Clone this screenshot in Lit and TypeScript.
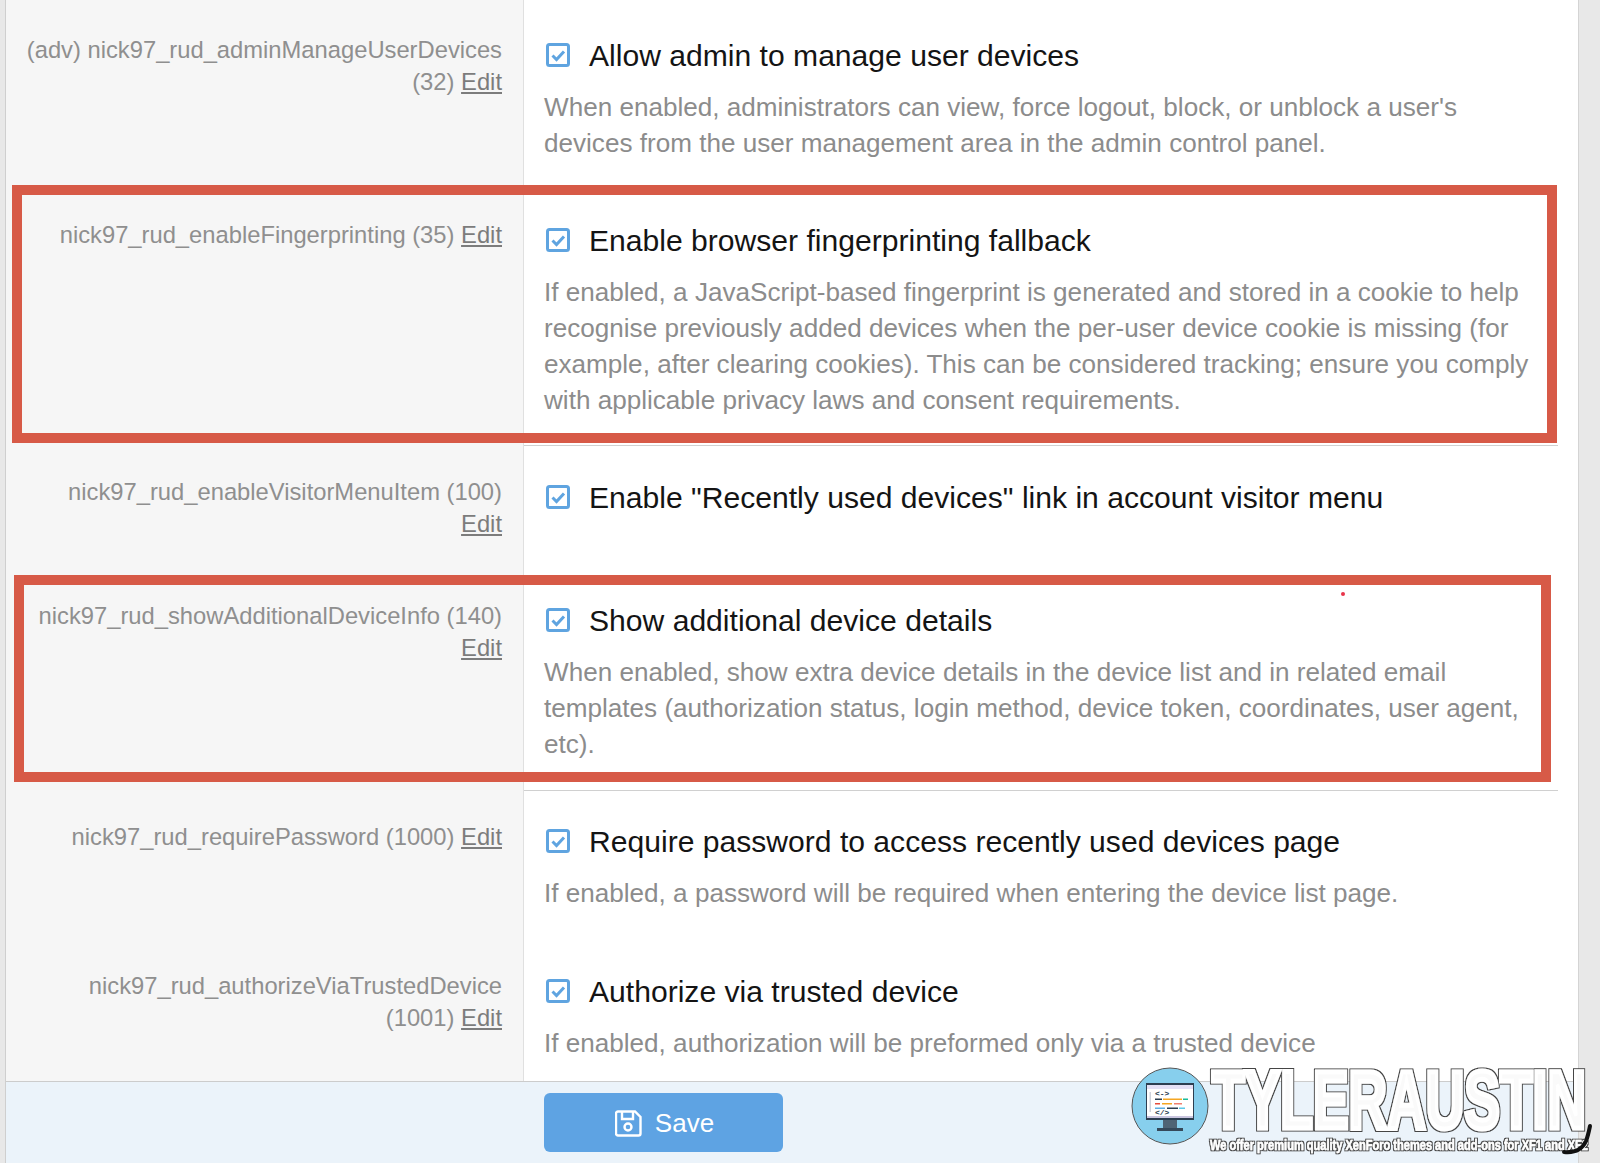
import { LitElement, html, css, svg } from 'lit';
import { customElement } from 'lit/decorators.js';

interface OptionRow {
  label: string;
  title: string;
  desc: string[];
  rule?: boolean;
}

const ROWS: OptionRow[] = [
  {
    label: '(adv) nick97_rud_adminManageUserDevices (32)',
    title: 'Allow admin to manage user devices',
    desc: [
      "When enabled, administrators can view, force logout, block, or unblock a user's",
      'devices from the user management area in the admin control panel.',
    ],
  },
  {
    label: 'nick97_rud_enableFingerprinting (35)',
    title: 'Enable browser fingerprinting fallback',
    desc: [
      'If enabled, a JavaScript-based fingerprint is generated and stored in a cookie to help',
      'recognise previously added devices when the per-user device cookie is missing (for',
      'example, after clearing cookies). This can be considered tracking; ensure you comply',
      'with applicable privacy laws and consent requirements.',
    ],
    rule: true,
  },
  {
    label: 'nick97_rud_enableVisitorMenuItem (100)',
    title: 'Enable "Recently used devices" link in account visitor menu',
    desc: [],
  },
  {
    label: 'nick97_rud_showAdditionalDeviceInfo (140)',
    title: 'Show additional device details',
    desc: [
      'When enabled, show extra device details in the device list and in related email',
      'templates (authorization status, login method, device token, coordinates, user agent,',
      'etc).',
    ],
    rule: true,
  },
  {
    label: 'nick97_rud_requirePassword (1000)',
    title: 'Require password to access recently used devices page',
    desc: ['If enabled, a password will be required when entering the device list page.'],
  },
  {
    label: 'nick97_rud_authorizeViaTrustedDevice (1001)',
    title: 'Authorize via trusted device',
    desc: ['If enabled, authorization will be preformed only via a trusted device'],
  },
];

const checkbox = html`<svg class="check" viewBox="0 0 24 24" width="24" height="24">
  <rect x="1.500" y="1.500" width="21" height="21" rx="2" fill="#fff" stroke="#5fa4e0" stroke-width="3"></rect>
  <path d="M6.500 12.500l4 4 7.500-8" fill="none" stroke="#5fa4e0" stroke-width="3"></path>
</svg>`;

const saveIcon = html`<svg viewBox="0 0 27 27" width="27" height="27" fill="none" stroke="#fff" stroke-width="2.400">
  <path d="M3 1.500h17l5.500 5.500v16.500a2 2 0 0 1-2 2H3a2 2 0 0 1-2-2V3.500a2 2 0 0 1 2-2z"></path>
  <path d="M7 2v7h11V2"></path>
  <circle cx="13" cy="17" r="3.500"></circle>
</svg>`;

const logo = svg`
  <defs>
    <filter id="outline" x="-5%" y="-10%" width="110%" height="120%">
      <feMorphology in="SourceAlpha" operator="dilate" radius="1" result="fat"></feMorphology>
      <feFlood flood-color="#444"></feFlood>
      <feComposite in2="fat" operator="in" result="edge"></feComposite>
      <feMerge><feMergeNode in="edge"></feMergeNode><feMergeNode in="SourceGraphic"></feMergeNode></feMerge>
    </filter>
  </defs>
  <g transform="translate(0 6)">
    <circle cx="40" cy="40" r="38" fill="#87cfed" stroke="#555" stroke-width="1"></circle>
    <rect x="33" y="54" width="14" height="8" fill="#4f6475"></rect>
    <rect x="27" y="62" width="26" height="3" fill="#35495a"></rect>
    <rect x="16" y="17" width="48" height="37" fill="#2c3e50"></rect>
    <rect x="17" y="19" width="46" height="4" fill="#e4e0f5"></rect>
    <rect x="17" y="23" width="46" height="29" fill="#fff"></rect>
    <rect x="17" y="50" width="46" height="2" fill="#c9c5df"></rect>
    <rect x="19.500" y="26" width="1.500" height="20" fill="#cfd3dc"></rect>
    <text x="25" y="29.500" font-family="Liberation Mono, monospace" font-weight="700" font-size="8" fill="#2c3e50">&lt;-&gt;</text>
    <rect x="25" y="32.500" width="7" height="1.500" fill="#2c3e50"></rect>
    <rect x="33" y="32.500" width="19" height="1.500" fill="#f5a623"></rect>
    <rect x="53" y="32.500" width="5" height="1.500" fill="#1abc9c"></rect>
    <rect x="25" y="37" width="5" height="1.500" fill="#e74c3c"></rect>
    <rect x="32" y="37" width="10" height="1.500" fill="#f5a623"></rect>
    <rect x="44" y="37" width="8" height="1.500" fill="#f08070"></rect>
    <rect x="25" y="41.500" width="10" height="1.500" fill="#5dade2"></rect>
    <rect x="37" y="41.500" width="11" height="1.500" fill="#2c3e50"></rect>
    <rect x="49" y="41.500" width="6" height="1.500" fill="#5dc8e8"></rect>
    <text x="25" y="49" font-family="Liberation Mono, monospace" font-weight="700" font-size="8" fill="#2c3e50">&lt;/&gt;</text>
  </g>
  <text x="82" y="68" textLength="374" lengthAdjust="spacingAndGlyphs" font-family="Liberation Sans, sans-serif" font-weight="700" font-size="82" fill="#fff" fill-opacity="0.95" stroke="#fff" stroke-width="5" filter="url(#outline)">TYLERAUSTIN</text>
  <text x="80" y="90" textLength="378" lengthAdjust="spacingAndGlyphs" font-family="Liberation Sans, sans-serif" font-weight="700" font-size="15" fill="#fff" stroke="#fff" stroke-width="0.500" filter="url(#outline)">We offer premium quality XenForo themes and add-ons for XF1 and XF2</text>
  <path d="M434 92c10 1 18-2 22-11 2-5 3-10 4-15" fill="none" stroke="#111" stroke-width="4" stroke-linecap="round"></path>
`;

@customElement('app-root')
export class AppRoot extends LitElement {
  static styles = css`
    :host {
      display: block;
      position: relative;
      width: 1600px;
      height: 1163px;
      overflow: hidden;
      background: #e8e8e8;
      font-family: 'Liberation Sans', Arial, sans-serif;
    }
    .sheet {
      margin: 0 21px 0 5px;
      height: 1163px;
      background: #fff;
      border-left: 1px solid #cfcfcf;
      border-right: 1px solid #d4d4d4;
      display: flex;
      flex-direction: column;
    }
    .row {
      display: grid;
      grid-template-columns: 518px 1fr;
      background: #fff;
    }
    .left {
      background: #f6f6f6;
      border-right: 1px solid #e0e0e0;
      padding: 31px 21px 28px 19px;
      text-align: right;
      font-size: 23.750px;
      line-height: 32px;
      color: #8f8f8f;
    }
    .left a {
      color: #7c7c7c;
      text-decoration: underline;
    }
    .right {
      margin-right: 20px;
      padding: 35px 0 27px 20px;
    }
    .row:nth-child(1) .left {
      padding-top: 34px;
    }
    .row:nth-child(1) .right {
      padding: 38px 0 26px 20px;
    }
    .row:nth-child(2) .left {
      padding-top: 32px;
    }
    .row:nth-child(2) .right {
      padding: 36px 0 27px 20px;
    }
    .row:nth-child(3) .left {
      padding: 30px 21px 29px 19px;
    }
    .row:nth-child(3) .right {
      padding: 34px 0 0 20px;
    }
    .row:nth-child(4) .left {
      padding-top: 31px;
    }
    .row:nth-child(4) .right {
      padding: 34px 0 28px 20px;
    }
    .row:nth-child(5) .left {
      padding-top: 30px;
    }
    .row:nth-child(5) .right {
      padding: 33px 0 28px 20px;
    }
    .row:nth-child(6) {
      flex: 1;
    }
    .row:nth-child(6) .right {
      padding-bottom: 0;
    }
    .rule .right {
      border-bottom: 1px solid #d0d0d0;
    }
    .title {
      display: flex;
      align-items: center;
      gap: 19px;
      padding-left: 2px;
      font-size: 30.100px;
      line-height: 36px;
      color: #141414;
    }
    .check {
      flex: none;
      margin-top: -2px;
    }
    .desc {
      margin-top: 15px;
      font-size: 26.100px;
      line-height: 36px;
      color: #8c8c8c;
      white-space: nowrap;
    }
    .footer {
      height: 70px;
      padding-top: 11px;
      background: #ebf3fa;
      border-top: 1px solid #cccccc;
    }
    .save {
      margin-left: 538px;
      width: 239px;
      height: 59px;
      display: flex;
      align-items: center;
      justify-content: center;
      gap: 13px;
      padding: 2px 0 0 2px;
      border: none;
      border-radius: 6px;
      background: #5ea3e3;
      color: #fff;
      font: 26px 'Liberation Sans', Arial, sans-serif;
    }
    .mark {
      position: absolute;
      box-sizing: border-box;
      border: 10px solid #d75a47;
    }
    .mark-a {
      left: 12px;
      top: 185px;
      width: 1545px;
      height: 258px;
    }
    .mark-b {
      left: 14px;
      top: 575px;
      width: 1537px;
      height: 207px;
    }
    .dot {
      position: absolute;
      left: 1341px;
      top: 592px;
      width: 4px;
      height: 4px;
      border-radius: 50%;
      background: #e8344a;
    }
    .logo {
      position: absolute;
      left: 1130px;
      top: 1060px;
    }
  `;

  renderRow(row: OptionRow) {
    return html`<div class="row ${row.rule ? 'rule' : ''}">
      <div class="left">${row.label} <a>Edit</a></div>
      <div class="right">
        <div class="title">${checkbox}<span>${row.title}</span></div>
        ${row.desc.length
          ? html`<div class="desc">${row.desc.map((line) => html`<div>${line}</div>`)}</div>`
          : ''}
      </div>
    </div>`;
  }

  render() {
    return html`
      <div class="sheet">
        ${ROWS.map((row) => this.renderRow(row))}
        <div class="footer">
          <button class="save" type="button">${saveIcon}<span>Save</span></button>
        </div>
      </div>
      <div class="mark mark-a"></div>
      <div class="mark mark-b"></div>
      <div class="dot"></div>
      <svg class="logo" width="470" height="103" viewBox="0 0 470 103">${logo}</svg>
    `;
  }
}
